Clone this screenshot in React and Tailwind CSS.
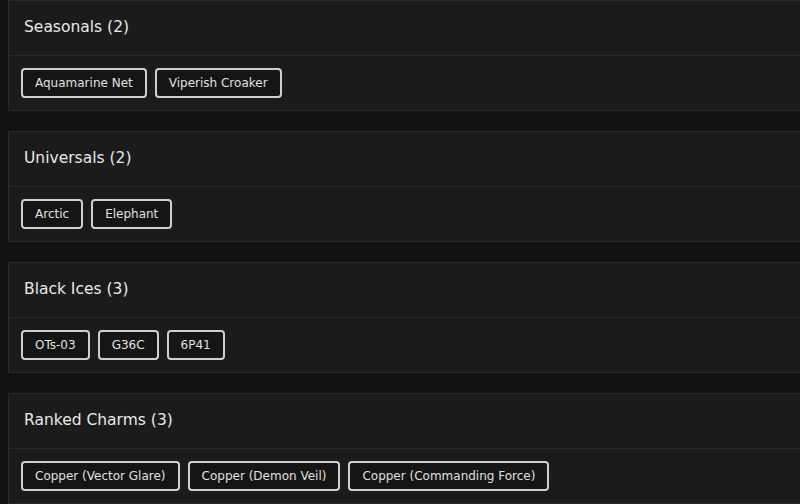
import React from 'react';

const groups = [
  { title: 'Seasonals', items: ['Aquamarine Net', 'Viperish Croaker'] },
  { title: 'Universals', items: ['Arctic', 'Elephant'] },
  { title: 'Black Ices', items: ['OTs-03', 'G36C', '6P41'] },
  { title: 'Ranked Charms', items: ['Copper (Vector Glare)', 'Copper (Demon Veil)', 'Copper (Commanding Force)'] },
];

export default function App() {
  return (
    <div className="w-[800px] h-[504px] overflow-hidden bg-[#121212] text-[#e6e6e6]" style={{ fontFamily: '"DejaVu Sans", sans-serif' }}>
      <div className="w-[830px] pl-2 flex flex-col gap-5">
        {groups.map(g => (
          <div key={g.title} className="bg-[#1b1b1b] border border-[#2a2a2a]">
            <div className="h-[55px] flex items-center px-[15px] border-b border-[#2a2a2a]">
              <h3 className="text-[15.5px] font-medium text-[#e8e8e8]">{g.title} ({g.items.length})</h3>
            </div>
            <div className="h-[54px] flex items-center gap-2 px-3">
              {g.items.map(it => (
                <span key={it} className="h-[30px] flex items-center px-3 rounded-[4px] border-2 border-[#cfcfcf] bg-[#151515] text-[12px] text-[#e0e0e0]">
                  {it}
                </span>
              ))}
            </div>
          </div>
        ))}
      </div>
    </div>
  );
}
